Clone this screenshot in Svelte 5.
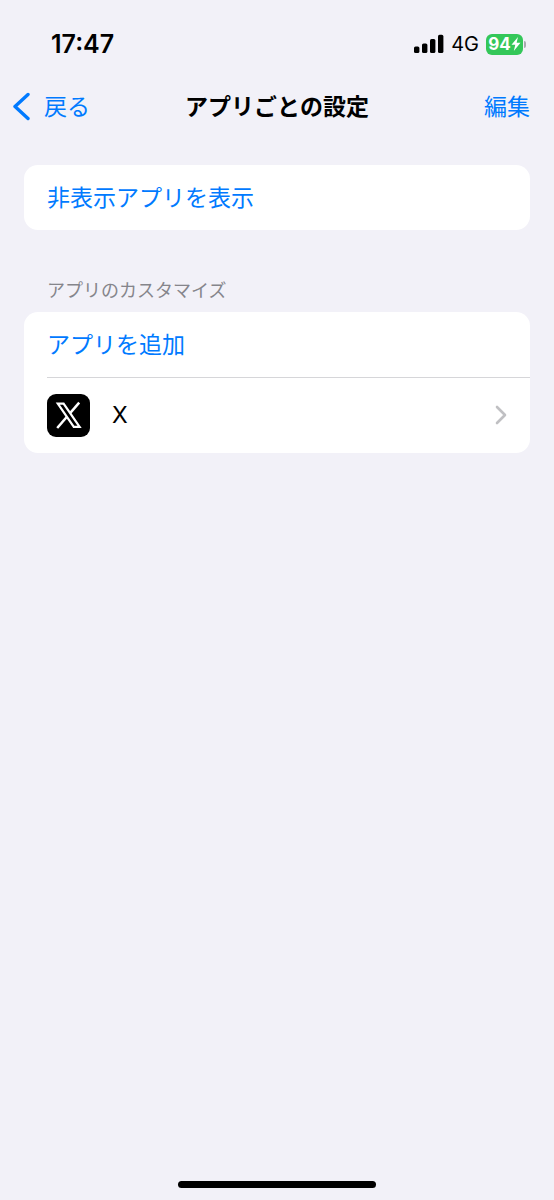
<script lang="ts">
	const time = '17:47';
	const network = '4G';
	const battery = 94;

	let apps = $state([{ id: 'x', name: 'X' }]);
</script>

<div class="screen">
	<div class="status-bar">
		<span class="time">{time}</span>
		<div class="status-right">
			<svg class="signal" viewBox="0 0 30 20" width="30" height="20" aria-hidden="true">
				<rect x="0" y="12.5" width="5.4" height="6.5" rx="1.6" />
				<rect x="8" y="9.5" width="5.4" height="9.5" rx="1.6" />
				<rect x="16" y="5" width="5.4" height="14" rx="1.6" />
				<rect x="24" y="0.8" width="5.4" height="18.2" rx="1.6" />
			</svg>
			<span class="network">{network}</span>
			<div class="battery">
				<div class="battery-body">
					<span>{battery}</span>
					<svg viewBox="0 0 10 14" width="10" height="14" aria-hidden="true">
						<path d="M7 0 L0.5 7.8 H4.3 L2.8 14 L9.5 5.8 H5.6 Z" fill="#fff" />
					</svg>
				</div>
				<div class="battery-cap"></div>
			</div>
		</div>
	</div>

	<header class="nav-bar">
		<button class="back" type="button">
			<svg viewBox="0 0 18 30" width="18" height="30" aria-hidden="true">
				<path d="M16 2.5 L3 14.5 L16 26.5" />
			</svg>
			<span>戻る</span>
		</button>
		<h1>アプリごとの設定</h1>
		<button class="edit" type="button">編集</button>
	</header>

	<main>
		<section class="card">
			<button class="row" type="button">非表示アプリを表示</button>
		</section>

		<h2>アプリのカスタマイズ</h2>
		<section class="card">
			<button class="row" type="button">アプリを追加</button>
			{#each apps as app (app.id)}
				<a class="row app-row" href="#{app.id}">
					<svg class="app-icon" viewBox="0 0 43 43" width="43" height="43" aria-hidden="true">
						<rect width="43" height="43" rx="9" fill="#000" />
						<path d="M32.2 8.6 L10.2 34" stroke="#fff" stroke-width="2.5" />
						<path
							d="M10.8 9.6 H16.6 L32.6 32.8 H26.8 Z"
							fill="#000"
							stroke="#fff"
							stroke-width="2.2"
						/>
					</svg>
					<span class="app-name">{app.name}</span>
					<svg class="chevron" viewBox="0 0 12 20" width="12" height="20" aria-hidden="true">
						<path d="M2 2 L10 10 L2 18" />
					</svg>
				</a>
			{/each}
		</section>
	</main>

	<div class="home-indicator"></div>
</div>

<style>
	:global(body) {
		margin: 0;
		background: #f2f1f8;
	}

	.screen {
		display: flex;
		flex-direction: column;
		min-height: 100vh;
		box-sizing: border-box;
		padding-bottom: 12px;
		background: #f2f1f8;
		color: #000;
		font-family: Inter, 'Noto Sans CJK JP', sans-serif;
		font-size: 23px;
		line-height: 32px;
	}

	button {
		border: 0;
		padding: 0;
		background: none;
		color: #007aff;
		font: inherit;
		cursor: pointer;
	}

	.status-bar {
		display: flex;
		align-items: center;
		justify-content: space-between;
		height: 80px;
		padding: 8px 28px 0 51px;
		box-sizing: border-box;
	}

	.time {
		font-size: 25px;
		font-weight: 600;
	}

	.status-right {
		display: flex;
		align-items: center;
		gap: 7px;
	}

	.network {
		font-size: 20px;
	}

	.battery {
		display: flex;
		align-items: center;
		gap: 1px;
	}

	.battery-body {
		display: flex;
		align-items: center;
		justify-content: center;
		width: 37px;
		height: 21px;
		border-radius: 6px;
		background: #34c759;
		color: #fff;
		font-size: 17px;
		font-weight: 700;
		line-height: 21px;
	}

	.battery-cap {
		width: 2px;
		height: 7px;
		border-radius: 0 2px 2px 0;
		background: #a9a9b0;
	}

	.nav-bar {
		display: grid;
		grid-template-columns: 1fr auto 1fr;
		align-items: center;
		height: 54px;
		padding: 0 24px;
	}

	.back {
		display: flex;
		align-items: center;
		gap: 14px;
		justify-self: start;
		margin-left: -12px;
	}

	.back path {
		fill: none;
		stroke: #007aff;
		stroke-width: 3.4;
		stroke-linecap: round;
		stroke-linejoin: round;
	}

	h1 {
		margin: 0;
		font-size: 23px;
		font-weight: 700;
	}

	.edit {
		justify-self: end;
	}

	main {
		flex: 1;
		padding: 31px 24px 0;
	}

	.card {
		border-radius: 14px;
		background: #fff;
		overflow: hidden;
	}

	.row {
		display: flex;
		align-items: center;
		width: 100%;
		height: 65px;
		padding: 0 23px;
		box-sizing: border-box;
		text-align: left;
	}

	h2 {
		margin: 0;
		padding: 49px 23px 9px;
		color: #85858b;
		font-size: 18px;
		font-weight: 400;
		line-height: 24px;
	}

	.app-row {
		height: 76px;
		gap: 22px;
		color: #000;
		text-decoration: none;
		/* hairline that starts at the text inset and runs to the card edge */
		background: linear-gradient(#d6d6d9, #d6d6d9) 23px 0 / 100% 1px no-repeat;
	}

	.app-name {
		flex: 1;
	}

	.chevron path {
		fill: none;
		stroke: #c0c0c3;
		stroke-width: 2.6;
		stroke-linecap: round;
		stroke-linejoin: round;
	}

	.home-indicator {
		align-self: center;
		width: 198px;
		height: 7px;
		border-radius: 4px;
		background: #000;
	}
</style>
